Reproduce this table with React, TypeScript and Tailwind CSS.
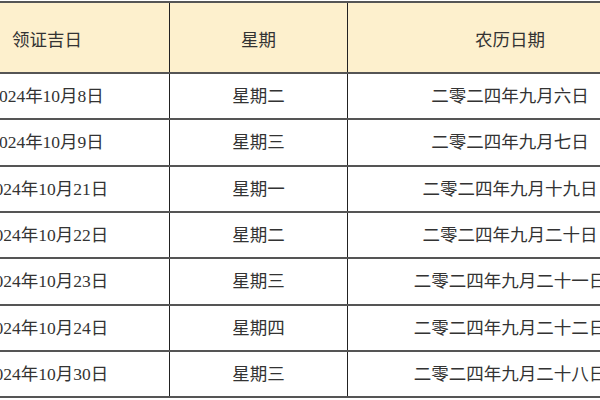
import React from "react";

const rows = [
  { d: "2024年10月8日", w: "星期二", n: "二零二四年九月六日", h: "h-[46px]" },
  { d: "2024年10月9日", w: "星期三", n: "二零二四年九月七日", h: "h-[47px]" },
  { d: "2024年10月21日", w: "星期一", n: "二零二四年九月十九日", h: "h-[46px]" },
  { d: "2024年10月22日", w: "星期二", n: "二零二四年九月二十日", h: "h-[46px]" },
  { d: "2024年10月23日", w: "星期三", n: "二零二四年九月二十一日", h: "h-[47px]" },
  { d: "2024年10月24日", w: "星期四", n: "二零二四年九月二十二日", h: "h-[46px]" },
  { d: "2024年10月30日", w: "星期三", n: "二零二四年九月二十八日", h: "h-[46px]" },
];

const font = {
  fontFamily: '"Liberation Serif", "Noto Sans CJK SC", serif',
};

export default function App() {
  return (
    <div className="w-[600px] h-[400px] overflow-hidden bg-white pt-px">
      <div
        className="ml-[-75px] w-[760px] text-[17.5px] text-[#333] leading-none"
        style={font}
      >
        <div className="grid grid-cols-[245px_178px_337px] h-[73px] border-t-2 border-b-2 border-[#555] bg-[#fdf0cd]">
          <div className="flex items-center justify-center pt-[7px] border-r-[1.5px] border-[#222]">领证吉日</div>
          <div className="flex items-center justify-center pt-[7px] border-r-[1.5px] border-[#222]">星期</div>
          <div className="flex items-center justify-center pt-[7px] pr-[13px]">农历日期</div>
        </div>
        {rows.map((r) => (
          <div
            key={r.d}
            className={`grid grid-cols-[245px_178px_337px] border-b-2 border-[#555] ${r.h}`}
          >
            <div className="flex items-center justify-center pt-[1px] border-r-[1.5px] border-[#222]">{r.d}</div>
            <div className="flex items-center justify-center pt-[1px] border-r-[1.5px] border-[#222]">{r.w}</div>
            <div className="flex items-center justify-center pt-[1px] pr-[13px]">{r.n}</div>
          </div>
        ))}
      </div>
    </div>
  );
}
